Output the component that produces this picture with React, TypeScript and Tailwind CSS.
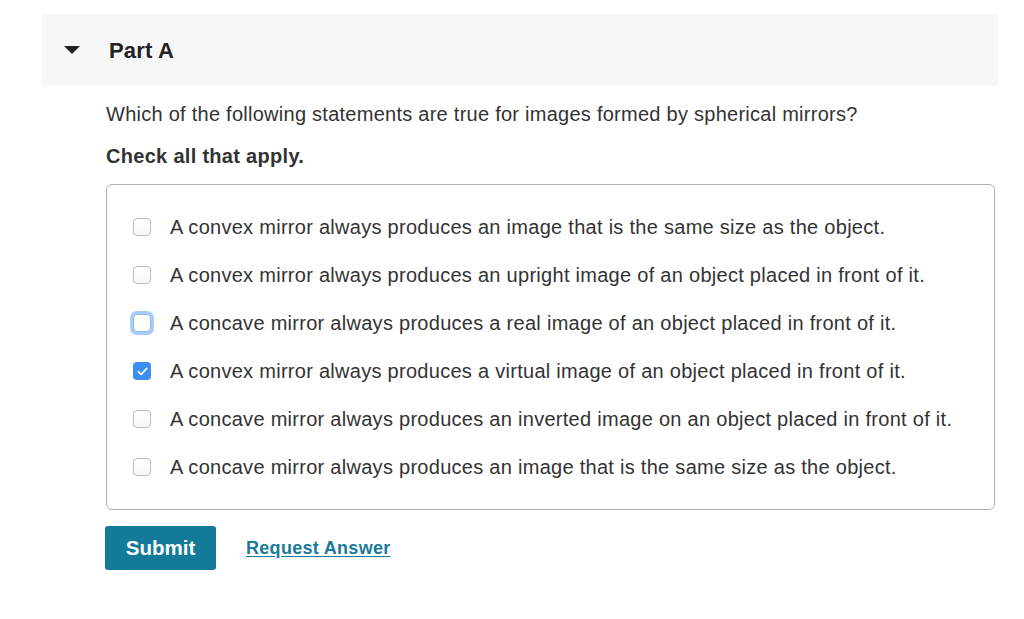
import React from "react";

const options = [
  { text: "A convex mirror always produces an image that is the same size as the object.", state: "none" },
  { text: "A convex mirror always produces an upright image of an object placed in front of it.", state: "none" },
  { text: "A concave mirror always produces a real image of an object placed in front of it.", state: "focus" },
  { text: "A convex mirror always produces a virtual image of an object placed in front of it.", state: "checked" },
  { text: "A concave mirror always produces an inverted image on an object placed in front of it.", state: "none" },
  { text: "A concave mirror always produces an image that is the same size as the object.", state: "none" },
];

function Box({ state }: { state: string }) {
  if (state === "checked") {
    return (
      <div className="w-[18px] h-[18px] rounded-[4px] bg-[#3d8ef2] flex items-center justify-center">
        <svg width="11" height="9" viewBox="0 0 11 9">
          <path d="M1.5 4.8 L4.2 7.4 L9.6 1.5" fill="none" stroke="white" strokeWidth="1.8" strokeLinecap="round" strokeLinejoin="round" />
        </svg>
      </div>
    );
  }
  if (state === "focus") {
    return (
      <div className="w-[18px] h-[18px] rounded-[4px] bg-white border border-[#8fb8ee] shadow-[0_0_0_3px_#a9cdf7]" />
    );
  }
  return <div className="w-[18px] h-[18px] rounded-[4px] bg-gradient-to-b from-white to-[#f6f6f6] border border-[#bdbdbd]" />;
}

export default function App() {
  return (
    <div className="w-[1024px] h-[619px] bg-white pt-[14px] text-[#333]" style={{ fontFamily: '"Liberation Sans", Arial, sans-serif' }}>
      <div className="ml-[42px] w-[956px] h-[72px] bg-[#f7f7f7] flex items-center">
        <svg className="ml-[22px]" width="16" height="8" viewBox="0 0 16 8">
          <path d="M0 0 H16 L8 8 Z" fill="#222" />
        </svg>
        <span className="ml-[29px] text-[22px] font-bold text-[#222] tracking-[0.2px]">Part A</span>
      </div>
      <div className="ml-[106px] w-[889px]">
        <p className="mt-[14px] text-[20px] leading-[28px] text-[#333] tracking-[0.26px]">
          Which of the following statements are true for images formed by spherical mirrors?
        </p>
        <p className="mt-[14px] text-[20px] leading-[28px] font-bold text-[#333] tracking-[0.3px]">Check all that apply.</p>
        <div className="mt-[14px] h-[326px] border border-[#b0b0b0] rounded-[6px] pt-[18px] flex flex-col">
          {options.map((o, i) => (
            <div key={i} className="h-[48px] flex items-center">
              <div className="ml-[26px] w-[18px] flex justify-center">
                <Box state={o.state} />
              </div>
              <span className="ml-[19px] text-[20px] text-[#333] tracking-[0.28px]">{o.text}</span>
            </div>
          ))}
        </div>
        <div className="mt-[16px] flex items-center">
          <button className="-ml-px w-[111px] h-[44px] rounded-[3px] bg-[#137a99] text-white text-[20.5px] font-bold">
            Submit
          </button>
          <a className="ml-[30px] text-[18px] font-bold text-[#1a7a9a] underline underline-offset-2 tracking-[0.3px]">Request Answer</a>
        </div>
      </div>
    </div>
  );
}
